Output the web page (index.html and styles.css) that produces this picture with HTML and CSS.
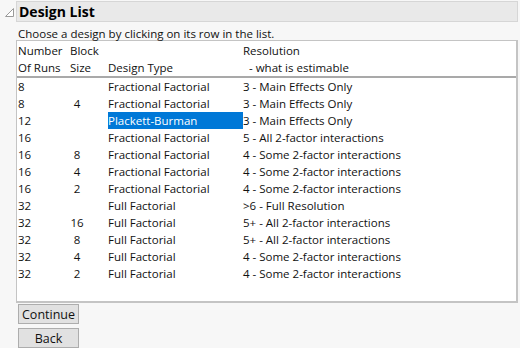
FILE: index.html
```html
<!DOCTYPE html>
<html>
<head>
<meta charset="UTF-8">
<link rel="stylesheet" href="styles.css">
</head>
<body>
	<div class="outline">
		<div class="title">
			<svg class="tri" width="9" height="9" viewBox="0 0 9 9"><path d="M0.5 8.5 L8.5 0.5 L8.5 8.5 Z" fill="#fff" stroke="#9a9a9a"/></svg>
			<div class="titlebox">Design List</div>
		</div>
		<div class="content">
			<div class="hint">Choose a design by clicking on its row in the list.</div>
			<div class="list">
				<div class="row head">
					<span>Number</span><span class="blk-h">Block</span><span></span><span>Resolution</span>
				</div>
				<div class="row head">
					<span>Of Runs</span><span class="blk-h">Size</span><span>Design Type</span><span>&nbsp; - what is estimable</span>
				</div>
				<div class="sep"></div>
				<div id="rows"></div>
			</div>
			<div class="buttons">
				<button class="btn">Continue</button>
				<button class="btn">Back</button>
			</div>
		</div>
	</div>

	<script>
		var designs = [
			['8', '', 'Fractional Factorial', '3 - Main Effects Only'],
			['8', '4', 'Fractional Factorial', '3 - Main Effects Only'],
			['12', '', 'Plackett-Burman', '3 - Main Effects Only'],
			['16', '', 'Fractional Factorial', '5 - All 2-factor interactions'],
			['16', '8', 'Fractional Factorial', '4 - Some 2-factor interactions'],
			['16', '4', 'Fractional Factorial', '4 - Some 2-factor interactions'],
			['16', '2', 'Fractional Factorial', '4 - Some 2-factor interactions'],
			['32', '', 'Full Factorial', '>6 - Full Resolution'],
			['32', '16', 'Full Factorial', '5+ - All 2-factor interactions'],
			['32', '8', 'Full Factorial', '5+ - All 2-factor interactions'],
			['32', '4', 'Full Factorial', '4 - Some 2-factor interactions'],
			['32', '2', 'Full Factorial', '4 - Some 2-factor interactions']
		];
		var html = '';
		for (var i = 0; i < designs.length; ++i) {
			var d = designs[i];
			html += `<div class='row'>
				<span>${d[0]}</span><span class='blk'>${d[1]}</span>
				<span class='${i == 2 ? "type picked" : "type"}'>${d[2]}</span><span>${d[3].replace('>', '&gt;')}</span>
			</div>`;
		}
		document.getElementById('rows').innerHTML = html;
	</script>
</body>
</html>
```

FILE: styles.css
```css
body {
	margin: 0;
	background-color: #f7f7f7;
	font-family: "Open Sans", "Noto Sans", sans-serif;
	font-size: 11.5px;
	color: #111;
}
.title {
	display: flex;
	align-items: flex-start;
	padding: 1px 2px 0 5px;
}
.tri {
	margin-top: 7px;
	margin-right: 2px;
}
.titlebox {
	flex: 1;
	height: 19px;
	line-height: 19px;
	background-color: #e9e9e9;
	border: 1px solid #d6d6d6;
	padding-left: 2px;
	font-size: 14px;
	font-weight: bold;
	color: #000;
}
.content {
	padding: 0 2px 0 16px;
}
.hint {
	height: 18px;
	line-height: 23px;
	padding-left: 2px;
}
.list {
	background-color: #fff;
	border: 1px solid #c4c4c4;
	border-right-width: 2px;
	border-bottom-width: 2px;
	height: 259px;
	padding-top: 1px;
}
.row {
	display: grid;
	grid-template-columns: 52px 38px 135px 1fr;
	height: 17px;
	line-height: 17px;
	padding-left: 1px;
	white-space: nowrap;
}
.blk {
	text-align: center;
	width: 14px;
}
.sep {
	height: 2px;
	background-color: #a9a9a9;
}
.picked {
	background-color: #0078d7;
	color: #fff;
}
.buttons {
	display: flex;
	flex-direction: column;
	align-items: flex-start;
	gap: 4px;
	padding-top: 1px;
	padding-left: 2px;
}
.btn {
	width: 61px;
	height: 20px;
	padding: 0;
	font-family: inherit;
	font-size: 12.5px;
	color: #111;
	background-color: #e1e1e1;
	border: 1px solid #adadad;
	border-radius: 0;
}
```
